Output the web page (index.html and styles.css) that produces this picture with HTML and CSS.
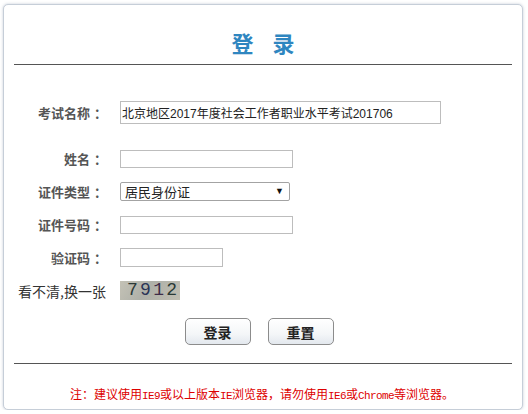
FILE: index.html
```html
<!DOCTYPE html>
<html lang="zh-CN">
  <head>
    <meta charset="UTF-8" />
    <meta name="viewport" content="width=device-width, initial-scale=1.0" />
    <title>登录</title>
    <link rel="stylesheet" href="styles.css">
  </head>
  <body>
    <div class="login-box">
      <h2 class="login-title">登<span class="title-gap"></span>录</h2>

      <form class="login-form" onsubmit="return false">
        <div class="form-row row-exam">
          <label for="exam">考试名称<span class="colon">：</span></label>
          <input type="text" id="exam" class="input-exam" value="北京地区2017年度社会工作者职业水平考试201706" />
        </div>
        <div class="form-row">
          <label for="name">姓名<span class="colon">：</span></label>
          <input type="text" id="name" class="input-text" />
        </div>
        <div class="form-row">
          <label for="idType">证件类型<span class="colon">：</span></label>
          <span class="select-wrap">
            <select id="idType">
              <option>居民身份证</option>
              <option>护照</option>
              <option>军官证</option>
            </select>
          </span>
        </div>
        <div class="form-row">
          <label for="idNo">证件号码<span class="colon">：</span></label>
          <input type="text" id="idNo" class="input-text" />
        </div>
        <div class="form-row">
          <label for="code">验证码<span class="colon">：</span></label>
          <input type="text" id="code" class="input-code" />
        </div>
        <div class="form-row">
          <span class="refresh-text">看不清,换一张</span>
          <span class="captcha"><span class="c1">7</span><span class="c2">9</span><span class="c3">1</span><span class="c4">2</span></span>
        </div>

        <div class="btn-row">
          <button type="submit" class="btn">登录</button>
          <button type="reset" class="btn">重置</button>
        </div>
      </form>

      <p class="login-note">注：建议使用<span class="en">IE9</span>或以上版本<span class="en">IE</span>浏览器，请勿使用<span class="en">IE6</span>或<span class="en">Chrome</span>等浏览器。</p>
    </div>
  </body>
</html>
```

FILE: styles.css
```css
/* Basic Reset */
* {
  margin: 0;
  padding: 0;
  box-sizing: border-box;
}

body {
  background-color: #fff;
  font-family: "Liberation Sans", "Noto Sans CJK SC", sans-serif;
  color: #333;
}

/* Card */
.login-box {
  width: 520px;
  height: 406px;
  margin: 4px 0 0 3px;
  padding: 0 10px;
  border: 1px solid #c6ced8;
  border-radius: 5px;
  box-shadow: 0 0 3px rgba(90, 110, 140, 0.35);
  background-color: #fff;
}

.login-title {
  padding: 22px 0 7px;
  line-height: 30px;
  font-size: 22px;
  font-weight: bold;
  text-align: center;
  color: #2f86c0;
  font-family: "Noto Sans CJK SC", sans-serif;
  border-bottom: 1px solid #555;
}

.title-gap {
  display: inline-block;
  width: 19px;
}

/* Form rows */
.login-form {
  margin-top: 31px;
}

.form-row {
  display: grid;
  grid-template-columns: 96px auto;
  column-gap: 10px;
  align-items: center;
  justify-items: start;
  height: 33px;
}

.row-exam {
  margin-bottom: 13px;
}

.form-row label {
  justify-self: end;
  margin-right: 3px;
  font-family: "Noto Sans CJK SC", sans-serif;
  font-size: 13px;
  font-weight: bold;
  color: #555;
}

/* centred full-width colon, as in the original font */
.colon {
  padding-left: 4px;
  font-family: "Noto Sans CJK TC", sans-serif;
}

.refresh-text {
  justify-self: end;
  margin-right: 4px;
  font-family: "Noto Sans CJK SC", sans-serif;
  font-size: 14px;
  color: #333;
}

.form-row input {
  border: 1px solid #bdbdbd;
  font-family: "Liberation Sans", "Noto Sans CJK SC", sans-serif;
  font-size: 12px;
  color: #222;
  outline: none;
}

.input-exam {
  width: 321px;
  height: 23px;
  padding: 0 1px;
}

.input-text {
  width: 173px;
  height: 18px;
}

.input-code {
  width: 103px;
  height: 19px;
}

/* Select */
.select-wrap {
  position: relative;
  display: inline-block;
}

.select-wrap select {
  appearance: none;
  -webkit-appearance: none;
  width: 170px;
  height: 19px;
  padding: 0 0 0 4px;
  border: 1px solid #a3a3a3;
  border-radius: 2px;
  background-color: #fff;
  font-family: "Noto Sans CJK SC", sans-serif;
  font-size: 13px;
  line-height: 17px;
  color: #222;
}

.select-wrap::after {
  content: "▼";
  position: absolute;
  right: 6px;
  top: 3px;
  font-size: 9px;
  line-height: 12px;
  color: #111;
  pointer-events: none;
}

/* Captcha */
.captcha {
  display: inline-block;
  width: 60px;
  height: 19px;
  padding-left: 7px;
  background: linear-gradient(120deg, #c4c2b6, #aeb0a8 45%, #c0beb2);
  font-family: "Liberation Mono", monospace;
  font-size: 18px;
  line-height: 19px;
  letter-spacing: 2.3px;
}

.c1 { color: #2c3a38; }
.c2 { color: #2a3556; }
.c3 { color: #3e2c48; }
.c4 { color: #2a3a36; }

/* Buttons */
.btn-row {
  display: flex;
  justify-content: center;
  gap: 17px;
  margin-top: 11px;
  padding-right: 8px;
  padding-bottom: 18px;
  border-bottom: 1px solid #555;
}

.btn {
  width: 66px;
  height: 27px;
  border: 1px solid #8c8c8c;
  border-radius: 5px;
  background: linear-gradient(#ffffff, #f4f6f8 60%, #e3e8ee);
  font-family: "Noto Sans CJK SC", sans-serif;
  font-size: 14px;
  font-weight: bold;
  color: #222;
  cursor: pointer;
}

/* Note */
.login-note {
  padding-top: 20px;
  padding-right: 2px;
  line-height: 20px;
  text-align: center;
  font-family: "Noto Sans CJK SC", sans-serif;
  font-size: 12px;
  color: #dd0000;
}

.login-note .en {
  font-family: "Liberation Mono", monospace;
  font-size: 11px;
  letter-spacing: -0.6px;
}
```
